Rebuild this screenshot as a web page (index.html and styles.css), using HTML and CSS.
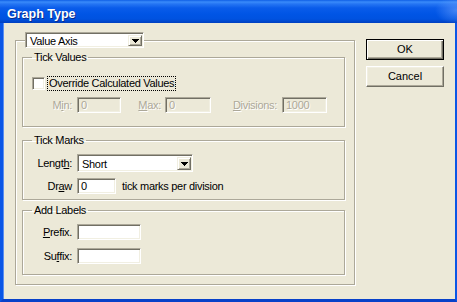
FILE: index.html
```html
<!DOCTYPE html>
<html>
<head>
<meta charset="utf-8">
<title>Graph Type</title>
<link rel="stylesheet" href="styles.css">
</head>
<body>
<div class="window">
  <div class="titlebar"><span class="title">Graph Type</span></div>
  <div class="frame">
    <div class="client">
      <fieldset class="group outer">
        <legend class="combo-legend">
          <div class="combo combo-axis">
            <span class="combo-text">Value Axis</span>
            <span class="combo-btn"><svg class="arrow" width="7" height="4" viewBox="0 0 7 4"><polygon points="0,0 7,0 3.5,4" fill="#000"/></svg></span>
          </div>
        </legend>

        <fieldset class="group inner tick-values">
          <legend>Tick Values</legend>
          <div class="row check-row">
            <span class="checkbox"></span>
            <span class="focus">Override Calculated Values</span>
          </div>
          <div class="row field-row">
            <span class="lbl disabled">M<u>i</u>n:</span>
            <span class="input disabled w-min">0</span>
            <span class="lbl disabled lbl-max"><u>M</u>ax:</span>
            <span class="input disabled w-max">0</span>
            <span class="lbl disabled lbl-div"><u>D</u>ivisions:</span>
            <span class="input disabled w-div">1000</span>
          </div>
        </fieldset>

        <fieldset class="group inner tick-marks">
          <legend>Tick Marks</legend>
          <div class="row length-row">
            <span class="lbl">Lengt<u>h</u>:</span>
            <div class="combo combo-length">
              <span class="combo-text">Short</span>
              <span class="combo-btn"><svg class="arrow" width="7" height="4" viewBox="0 0 7 4"><polygon points="0,0 7,0 3.5,4" fill="#000"/></svg></span>
            </div>
          </div>
          <div class="row field-row draw-row">
            <span class="lbl">Dr<u>a</u>w</span>
            <span class="input w-draw">0</span>
            <span class="after">tick marks per division</span>
          </div>
        </fieldset>

        <fieldset class="group inner add-labels">
          <legend>Add Labels</legend>
          <div class="row field-row prefix-row">
            <span class="lbl"><u>P</u>refix.</span>
            <span class="input w-fix"></span>
          </div>
          <div class="row field-row suffix-row">
            <span class="lbl">Su<u>f</u>fix:</span>
            <span class="input w-fix"></span>
          </div>
        </fieldset>
      </fieldset>

      <div class="buttons">
        <div class="btn btn-default">OK</div>
        <div class="btn">Cancel</div>
      </div>
    </div>
  </div>
</div>
</body>
</html>
```

FILE: styles.css
```css
* { box-sizing: border-box; }
html, body { margin: 0; padding: 0; }
body {
  width: 457px;
  height: 302px;
  overflow: hidden;
  background: #ECE9D8;
  font-family: "Liberation Sans", Arial, sans-serif;
  font-size: 11px;
  letter-spacing: -0.3px;
  color: #000;
}
.window {
  width: 457px;
  height: 302px;
  display: flex;
  flex-direction: column;
}
.titlebar {
  height: 23px;
  flex: none;
  padding: 7px 0 0 7px;
  background:
    radial-gradient(ellipse 22px 14px at 100% 45%, rgba(120,170,255,0.55), rgba(120,170,255,0) 100%),
    linear-gradient(to bottom, #0F5FE6 0px, #3A8BFA 2px, #2575F3 4px, #0A5CEA 8px, #0055E5 14px, #0052E0 19px, #0049D0 21px, #003FBF 23px);
}
.title {
  display: block;
  color: #fff;
  font-family: "Liberation Sans", Arial, sans-serif;
  font-weight: bold;
  font-size: 12.5px;
  line-height: 14px;
  letter-spacing: 0;
  text-shadow: 1px 1px 0 #0A2D8C;
}
.frame {
  flex: 1;
  display: flex;
  background: #ECE9D8;
  border-left: 3px solid #0A56E6;
  border-right: 2px solid #0A56E6;
  border-bottom: 3px solid #0841C9;
  box-shadow: inset 1px 0 0 #5A8EF0;
}
.client {
  display: flex;
  align-items: flex-start;
  padding: 9px 0 0 12px;
}

/* group boxes */
.group {
  margin: 0;
  min-width: 0;
  border: 1px solid #ACA899;
  box-shadow: inset 1px 1px 0 #fff, 1px 1px 0 #fff;
}
.group > legend {
  padding: 0 2px;
  line-height: 13px;
  height: 13px;
}
.outer {
  width: 340px;
  padding: 3px 9px 9px 6px;
}
.outer > legend.combo-legend {
  padding: 0;
  margin-left: 3px;
  height: 16px;
  line-height: 16px;
}
.inner {
  width: 323px;
  padding: 0 0 0 9px;
}
.inner > legend { margin-left: 0; }
.group.tick-values { padding-top: 12px; padding-bottom: 13px; }
.group.tick-marks { margin-top: 7px; padding-top: 7px; padding-bottom: 5px; }
.group.add-labels { margin-top: 4px; padding-top: 7px; padding-bottom: 10px; }

.row {
  display: flex;
  align-items: center;
}
.check-row { height: 15px; }
.field-row { height: 16px; margin-top: 6px; }
.row.prefix-row { margin-top: 0; }
.row.suffix-row { margin-top: 8px; }
.length-row { height: 18px; }

.checkbox {
  width: 13px;
  height: 13px;
  flex: none;
  background: #fff;
  border: 1px solid;
  border-color: #ACA899 #fff #fff #ACA899;
  box-shadow: inset 1px 1px 0 #716F64, inset -1px -1px 0 #F1EFE2;
}
.focus {
  margin-left: 2px;
  padding: 0 1px;
  height: 15px;
  line-height: 13px;
  border: 1px dotted #000;
}

.lbl {
  width: 41px;
  flex: none;
  text-align: right;
  padding-right: 1px;
  margin-right: 4px;
  line-height: 13px;
  white-space: nowrap;
}
.lbl.lbl-max { width: 41px; margin-right: 3px; }
.lbl.lbl-div { width: 67px; margin-right: 4px; }
.disabled { color: #ACA899; text-shadow: 1px 1px 0 #fff; }

.input {
  height: 16px;
  flex: none;
  background: #fff;
  border: 1px solid;
  border-color: #ACA899 #fff #fff #ACA899;
  box-shadow: inset 1px 1px 0 #716F64, inset -1px -1px 0 #F1EFE2;
  padding: 0 0 0 3px;
  line-height: 14px;
  white-space: nowrap;
}
.input.disabled { background: #ECE9D8; }
.w-min { width: 44px; }
.w-max { width: 46px; }
.w-div { width: 45px; }
.w-draw { width: 39px; }
.w-fix { width: 64px; }
.after { margin-left: 6px; line-height: 13px; white-space: nowrap; }

/* combo boxes */
.combo {
  display: flex;
  background: #fff;
  border: 1px solid;
  border-color: #ACA899 #fff #fff #ACA899;
  box-shadow: inset 1px 1px 0 #716F64, inset -1px -1px 0 #F1EFE2;
  padding: 2px 1px 1px 2px;
}
.combo-axis { width: 119px; height: 16px; }
.combo-length { width: 116px; height: 18px; }
.combo-text {
  flex: 1;
  padding-left: 2px;
  line-height: 12px;
  white-space: nowrap;
  overflow: hidden;
}
.combo-length .combo-text { line-height: 14px; }
.combo-btn {
  width: 14px;
  flex: none;
  display: flex;
  align-items: center;
  justify-content: center;
  background: #ECE9D8;
  border: 1px solid;
  border-color: #F1EFE2 #716F64 #716F64 #F1EFE2;
  box-shadow: inset 1px 1px 0 #fff, inset -1px -1px 0 #ACA899;
}
.arrow { display: block; shape-rendering: crispEdges; }

/* buttons */
.buttons {
  margin: 7px 0 0 11px;
  display: flex;
  flex-direction: column;
  gap: 6px;
}
.btn {
  width: 78px;
  height: 21px;
  display: flex;
  align-items: center;
  justify-content: center;
  background: #ECE9D8;
  border: 1px solid;
  border-color: #fff #716F64 #716F64 #fff;
  box-shadow: inset -1px -1px 0 #ACA899, inset 1px 1px 0 #F1EFE2;
  line-height: 13px;
  letter-spacing: 0;
}
.btn.btn-default {
  border: 1px solid #000;
  box-shadow: inset 1px 1px 0 #fff, inset -1px -1px 0 #716F64, inset -2px -2px 0 #ACA899;
}
u { text-decoration: underline; text-underline-offset: 1px; }
```
